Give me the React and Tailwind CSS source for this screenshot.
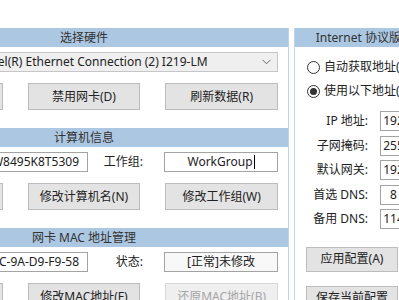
import React from 'react';

const Btn = ({ children, disabled }) => (
  <button
    className={`h-[27px] border text-[12px] whitespace-nowrap ${
      disabled ? 'bg-[#efefef] border-[#d8d8d8] text-[#a6a6a6]' : 'bg-[#e3e3e3] border-[#bcbcbc] text-[#222]'
    }`}
  >
    {children}
  </button>
);

const Header = ({ children }) => (
  <div className="h-[19px] bg-[#abc7e1] flex items-center justify-center text-[12px] text-[#333] leading-none whitespace-nowrap">
    {children}
  </div>
);

const Box = ({ children, muted, right }) => (
  <div
    className={`w-[114px] h-[20px] border border-[#a3a3a3] flex items-center overflow-hidden whitespace-nowrap text-[12px] text-[#222] ${
      right ? 'justify-end pr-[8px]' : 'justify-center'
    } ${muted ? 'bg-[#f8f8f8]' : 'bg-white'}`}
  >
    {children}
  </div>
);

const Section = ({ title, children, buttons }) => (
  <div className="pb-[18px]">
    <Header>{title}</Header>
    <div className="px-[10px]">
      <div className="mt-[5px]">{children}</div>
      <div className="mt-[11px] grid grid-cols-3 gap-[25px]">{buttons}</div>
    </div>
  </div>
);

const FieldRow = ({ l1, v1, l2, v2, muted }) => (
  <div className="flex items-center text-[12px] text-[#222] whitespace-nowrap">
    <div className="w-[63px] text-right">{l1}</div>
    <div className="ml-[21px]"><Box right>{v1}</Box></div>
    <div className="w-[55px] text-right">{l2}</div>
    <div className="ml-[21px]"><Box muted={muted}>{v2}</Box></div>
  </div>
);

const IpBox = ({ parts }) => (
  <div className="w-[130px] h-[20px] shrink-0 border border-[#a3a3a3] bg-white flex items-center text-[12px] text-[#222]">
    {parts.map((p, i) => (
      <React.Fragment key={i}>
        <span className="w-[25px] text-center">{p}</span>
        {i < 3 && <span>.</span>}
      </React.Fragment>
    ))}
  </div>
);

const Radio = ({ checked, label }) => (
  <div className="h-[24px] flex items-center text-[12px] text-[#222]">
    <span className="w-[13px] h-[13px] rounded-full border border-[#333] bg-white flex items-center justify-center">
      {checked && <span className="w-[7px] h-[7px] rounded-full bg-[#333]" />}
    </span>
    <span className="ml-[4px] whitespace-nowrap">{label}</span>
  </div>
);

const ipRows = [
  ['IP 地址:', ['192', '168', '1', '100']],
  ['子网掩码:', ['255', '255', '255', '0']],
  ['默认网关:', ['192', '168', '1', '1']],
  ['首选 DNS:', ['8', '8', '8', '8']],
  ['备用 DNS:', ['114', '114', '114', '114']],
];

export default function App() {
  return (
    <div className="w-[399px] h-[300px] overflow-hidden bg-white font-['Noto_Sans','Noto_Sans_CJK_SC',sans-serif]">
      <div className="flex pt-[28px] ml-[-120px] w-max">
        {/* left column */}
        <div className="w-[409px] shrink-0 border-r border-[#bcd3ea]">
          <Section
            title="选择硬件"
            buttons={[
              <Btn key="a">启用网卡(E)</Btn>,
              <Btn key="b">禁用网卡(D)</Btn>,
              <Btn key="c">刷新数据(R)</Btn>,
            ]}
          >
            <div className="flex items-center text-[12px] text-[#222]">
              <div className="w-[63px] text-right">网卡:</div>
              <div className="ml-[21px] flex-1 h-[20px] border border-[#c6c6c6] bg-[#efefef] flex items-center justify-between pl-[7px] pr-[6px]">
                <span className="whitespace-nowrap">Intel(R) Ethernet Connection (2) I219-LM</span>
                <svg width="9" height="6" viewBox="0 0 9 6" fill="none">
                  <path d="M0.5 0.8 L4.5 4.8 L8.5 0.8" stroke="#6b6b6b" strokeWidth="1" />
                </svg>
              </div>
            </div>
          </Section>

          <Section
            title="计算机信息"
            buttons={[
              <Btn key="a">刷新信息(I)</Btn>,
              <Btn key="b">修改计算机名(N)</Btn>,
              <Btn key="c">修改工作组(W)</Btn>,
            ]}
          >
            <FieldRow
              l1="计算机名:"
              v1="W8495K8T5309"
              l2="工作组:"
              v2={
                <span className="flex items-center">
                  WorkGroup<span className="w-px h-[14px] bg-black ml-[1px]" />
                </span>
              }
            />
          </Section>

          <Section
            title="网卡 MAC 地址管理"
            buttons={[
              <Btn key="a">随机MAC地址(M)</Btn>,
              <Btn key="b">修改MAC地址(F)</Btn>,
              <Btn key="c" disabled>还原MAC地址(B)</Btn>,
            ]}
          >
            <FieldRow l1="MAC 地址:" v1="E0-4C-9A-D9-F9-58" l2="状态:" v2="[正常]未修改" muted />
          </Section>
        </div>

        <div className="w-[5px] shrink-0" />

        {/* right column */}
        <div className="w-[210px] shrink-0 border-l border-[#bcd3ea] h-[300px]">
          <Header>Internet 协议版本 4 (TCP/IPv4)</Header>
          <div className="pl-[12px] pt-[8px]">
            <Radio label="自动获取地址(O)" />
            <Radio checked label="使用以下地址(S)" />
          </div>
          <div className="mt-[6px]">
            {ipRows.map(([label, parts]) => (
              <div key={label} className="h-[24.5px] flex items-center text-[12px] text-[#222]">
                <div className="w-[73px] shrink-0 text-right">{label}</div>
                <div className="ml-[12px] shrink-0"><IpBox parts={parts} /></div>
              </div>
            ))}
          </div>
          <div className="pl-[11px] mt-[15px] flex flex-col gap-[14px]">
            <button className="w-[92px] h-[25px] border border-[#bcbcbc] bg-[#e3e3e3] text-[12px] text-[#222]">应用配置(A)</button>
            <button className="w-[92px] h-[25px] border border-[#bcbcbc] bg-[#e3e3e3] text-[12px] text-[#222]">保存当前配置</button>
          </div>
        </div>
      </div>
    </div>
  );
}
